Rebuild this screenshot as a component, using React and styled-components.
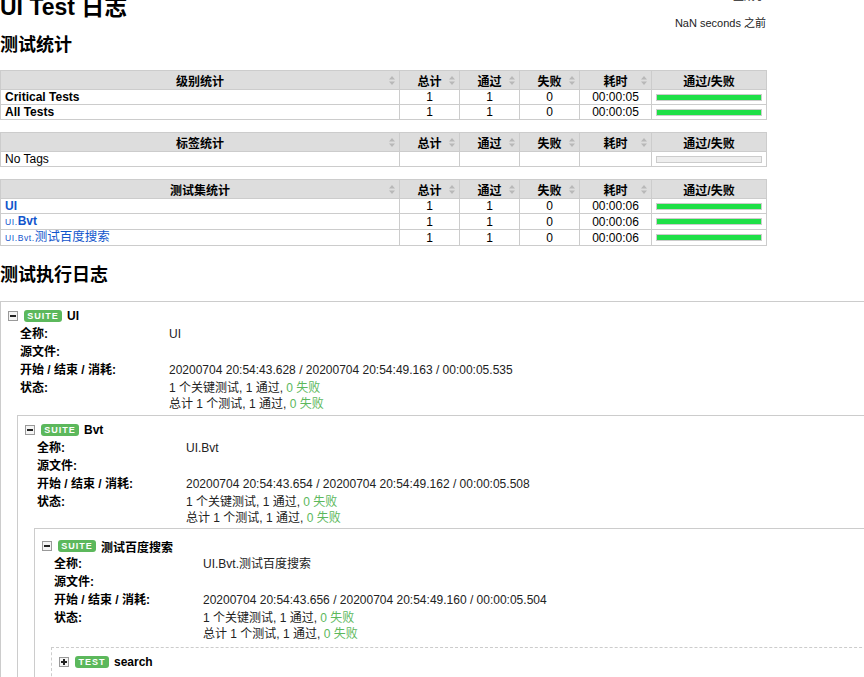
import React from "react";
import styled, { createGlobalStyle } from "styled-components";

const GlobalStyle = createGlobalStyle`
  html, body {
    margin: 0;
    padding: 0;
    overflow: hidden;
    background: #fff;
  }
  body {
    font-family: "Liberation Sans", "Noto Sans CJK SC", sans-serif;
    font-size: 12px;
    color: #000;
  }
`;

const levelStats = [
  { name: "Critical Tests", total: 1, pass: 1, fail: 0, elapsed: "00:00:05" },
  { name: "All Tests", total: 1, pass: 1, fail: 0, elapsed: "00:00:05" },
];

const suiteStats = [
  { parent: "", name: "UI", total: 1, pass: 1, fail: 0, elapsed: "00:00:06" },
  { parent: "UI.", name: "Bvt", total: 1, pass: 1, fail: 0, elapsed: "00:00:06" },
  { parent: "UI.Bvt.", name: "测试百度搜索", light: true, total: 1, pass: 1, fail: 0, elapsed: "00:00:06" },
];

const SortIcon = () => (
  <svg width="6" height="9" viewBox="0 0 6 9">
    <path d="M3 0 L6 3.5 L0 3.5 Z" fill="#b8b8b8" />
    <path d="M3 9 L6 5.5 L0 5.5 Z" fill="#b8b8b8" />
  </svg>
);

const Page = styled.div`
  width: 900px;
`;

const Header = styled.div`
  display: flex;
  justify-content: space-between;
  align-items: flex-start;
  width: 766px;
  height: 34px;
`;

const Title = styled.h1`
  margin: -7px 0 0 0;
  font-size: 23px;
  line-height: 28px;
  font-weight: bold;
`;

const Generated = styled.div`
  margin-top: -10px;
  text-align: right;
  font-size: 11px;
  line-height: 13px;
  color: #222;

  span {
    display: block;
  }
  span + span {
    margin-top: 14px;
  }
`;

const SectionTitle = styled.h2`
  margin: ${(p) => p.$top}px 0 ${(p) => p.$gap}px 0;
  font-size: 18px;
  line-height: 22px;
  font-weight: bold;
`;

const StatsTable = styled.table`
  width: 766px;
  border-collapse: collapse;
  table-layout: fixed;
  margin-bottom: 12px;
  border: 1px solid #ccc;

  th,
  td {
    border: 1px solid #ccc;
    padding: 0 4px;
  }
  th {
    background: #ddd;
    height: 18px;
    font-size: 12px;
    font-weight: bold;
  }
  td {
    height: 14px;
    line-height: 14px;
  }
`;

const Col = styled.col`
  width: ${(p) => p.$w}px;
`;

const HeadInner = styled.div`
  display: grid;
  grid-template-columns: 8px 1fr 8px;
  align-items: center;
  justify-items: center;

  & > svg {
    justify-self: end;
  }
`;

const NameCell = styled.td`
  font-weight: ${(p) => (p.$bold ? "bold" : "normal")};
  text-align: left;
`;

const NumCell = styled.td`
  text-align: center;
`;

const ParentName = styled.span`
  font-size: 8.5px;
  letter-spacing: 0.6px;
  color: #15c;
`;

const SuiteLink = styled.a`
  color: #15c;
  font-weight: ${(p) => (p.$light ? "normal" : "bold")};
  font-size: ${(p) => (p.$light ? "12.5px" : "12px")};
  text-decoration: none;
`;

const Bar = styled.div`
  height: 5px;
  border: 1px solid #ccc;
  background: ${(p) => (p.$empty ? "#eee" : "#1ee047")};
`;

const LogArea = styled.div`
  width: 900px;
`;

const Box = styled.div`
  border: 1px solid #ccc;
  border-style: ${(p) => (p.$dashed ? "dashed" : "solid")};
  margin-left: ${(p) => p.$indent}px;
  margin-top: ${(p) => p.$top}px;
  padding-bottom: 20px;
`;

const ElementHeader = styled.div`
  display: flex;
  align-items: center;
  gap: 6px;
  padding: ${(p) => (p.$cjk ? 10 : 7)}px 0 2px 7px;
  height: 14px;
`;

const Toggle = styled.span`
  width: 8px;
  height: 8px;
  border: 1px solid #999;
  background: #f4f4f4;
  position: relative;
  flex: none;

  &::before {
    content: "";
    position: absolute;
    left: 1px;
    right: 1px;
    top: 3px;
    height: 2px;
    background: #222;
  }
  &::after {
    content: "";
    display: ${(p) => (p.$open ? "none" : "block")};
    position: absolute;
    top: 1px;
    bottom: 1px;
    left: 3px;
    width: 2px;
    background: #222;
  }
`;

const Label = styled.span`
  display: inline-flex;
  align-items: center;
  justify-content: center;
  width: ${(p) => p.$w}px;
  height: 12px;
  border-radius: 3px;
  background: #5cb85c;
  color: #fff;
  font-size: 9px;
  font-weight: bold;
  letter-spacing: 1px;
`;

const ElementName = styled.span`
  font-weight: bold;
  font-size: 12px;
  margin-left: -1px;
`;

const Metadata = styled.table`
  border-collapse: collapse;
  margin-left: 19px;

  th {
    width: 149px;
    text-align: left;
    vertical-align: top;
    font-weight: bold;
    padding: 1px 0;
    line-height: 16px;
    white-space: nowrap;
  }
  td {
    padding: 1px 0;
    line-height: 16px;
    color: #222;
  }
`;

const Pass = styled.span`
  color: #5cb85c;
`;

const statsHead = (title) => (
  <thead>
    <tr>
      <th>
        <HeadInner>
          <span />
          <span>{title}</span>
          <SortIcon />
        </HeadInner>
      </th>
      {["总计", "通过", "失败", "耗时"].map((h) => (
        <th key={h}>
          <HeadInner>
            <span />
            <span>{h}</span>
            <SortIcon />
          </HeadInner>
        </th>
      ))}
      <th>通过/失败</th>
    </tr>
  </thead>
);

const Cols = () => (
  <colgroup>
    <Col $w={399} />
    <Col $w={60} />
    <Col $w={60} />
    <Col $w={60} />
    <Col $w={72} />
    <Col $w={115} />
  </colgroup>
);

const SuiteMeta = ({ full, times }) => (
  <Metadata>
    <tbody>
      <tr>
        <th>全称:</th>
        <td>{full}</td>
      </tr>
      <tr>
        <th>源文件:</th>
        <td></td>
      </tr>
      <tr>
        <th>开始 / 结束 / 消耗:</th>
        <td>{times}</td>
      </tr>
      <tr>
        <th>状态:</th>
        <td>
          1 个关键测试, 1 通过, <Pass>0 失败</Pass>
          <br />
          总计 1 个测试, 1 通过, <Pass>0 失败</Pass>
        </td>
      </tr>
    </tbody>
  </Metadata>
);

const App = () => {
  return (
    <Page>
      <GlobalStyle />
      <Header>
        <Title>UI Test 日志</Title>
        <Generated>
          <span>生成于</span>
          <span>NaN seconds 之前</span>
        </Generated>
      </Header>

      <SectionTitle $top={0} $gap={14}>
        测试统计
      </SectionTitle>

      <StatsTable>
        <Cols />
        {statsHead("级别统计")}
        <tbody>
          {levelStats.map((s) => (
            <tr key={s.name}>
              <NameCell $bold>{s.name}</NameCell>
              <NumCell>{s.total}</NumCell>
              <NumCell>{s.pass}</NumCell>
              <NumCell>{s.fail}</NumCell>
              <NumCell>{s.elapsed}</NumCell>
              <td>
                <Bar />
              </td>
            </tr>
          ))}
        </tbody>
      </StatsTable>

      <StatsTable>
        <Cols />
        {statsHead("标签统计")}
        <tbody>
          <tr>
            <NameCell>No Tags</NameCell>
            <NumCell />
            <NumCell />
            <NumCell />
            <NumCell />
            <td>
              <Bar $empty />
            </td>
          </tr>
        </tbody>
      </StatsTable>

      <StatsTable>
        <Cols />
        {statsHead("测试集统计")}
        <tbody>
          {suiteStats.map((s) => (
            <tr key={s.name}>
              <NameCell>
                {s.parent && <ParentName>{s.parent}</ParentName>}
                <SuiteLink $light={s.light}>{s.name}</SuiteLink>
              </NameCell>
              <NumCell>{s.total}</NumCell>
              <NumCell>{s.pass}</NumCell>
              <NumCell>{s.fail}</NumCell>
              <NumCell>{s.elapsed}</NumCell>
              <td>
                <Bar />
              </td>
            </tr>
          ))}
        </tbody>
      </StatsTable>

      <SectionTitle $top={18} $gap={15}>
        测试执行日志
      </SectionTitle>

      <LogArea>
        <Box $indent={0} $top={0}>
          <ElementHeader>
            <Toggle $open />
            <Label $w={38}>SUITE</Label>
            <ElementName>UI</ElementName>
          </ElementHeader>
          <SuiteMeta
            full="UI"
            times="20200704 20:54:43.628 / 20200704 20:54:49.163 / 00:00:05.535"
          />
          <Box $indent={16} $top={2}>
            <ElementHeader>
              <Toggle $open />
              <Label $w={38}>SUITE</Label>
              <ElementName>Bvt</ElementName>
            </ElementHeader>
            <SuiteMeta
              full="UI.Bvt"
              times="20200704 20:54:43.654 / 20200704 20:54:49.162 / 00:00:05.508"
            />
            <Box $indent={16} $top={1}>
              <ElementHeader $cjk>
                <Toggle $open />
                <Label $w={38}>SUITE</Label>
                <ElementName>测试百度搜索</ElementName>
              </ElementHeader>
              <SuiteMeta
                full="UI.Bvt.测试百度搜索"
                times="20200704 20:54:43.656 / 20200704 20:54:49.160 / 00:00:05.504"
              />
              <Box $indent={16} $top={4} $dashed>
                <ElementHeader>
                  <Toggle />
                  <Label $w={34}>TEST</Label>
                  <ElementName>search</ElementName>
                </ElementHeader>
              </Box>
            </Box>
          </Box>
        </Box>
      </LogArea>
    </Page>
  );
};

export default App;
